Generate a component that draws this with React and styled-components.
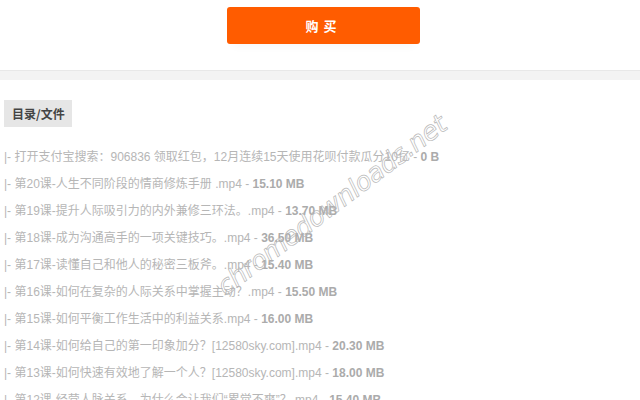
import React from "react";
import styled, { createGlobalStyle } from "styled-components";

const GlobalStyle = createGlobalStyle`
  html, body {
    margin: 0;
    padding: 0;
    background: #fff;
  }
  body {
    font-family: "Liberation Sans", "Noto Sans CJK SC", Arial, sans-serif;
  }
`;

const Page = styled.div`
  position: relative;
  width: 640px;
  height: 400px;
  overflow: hidden;
`;

const TopBar = styled.div`
  height: 70px;
  display: flex;
  justify-content: center;
  padding-top: 7px;
  box-sizing: border-box;
`;

const BuyButton = styled.button`
  width: 193px;
  height: 37px;
  margin-left: 7px;
  border: none;
  border-radius: 3px;
  background: #ff5c00;
  color: #fff;
  font-family: "Noto Sans CJK SC", sans-serif;
  font-size: 13px;
  font-weight: bold;
  letter-spacing: 5px;
  padding-left: 6px;
  cursor: pointer;
  box-shadow: 0 8px 10px -6px rgba(0, 0, 0, 0.04);
`;

const Divider = styled.div`
  height: 10px;
  background: #f3f3f3;
  border-top: 1px solid #e8e8e8;
  box-sizing: border-box;
`;

const Content = styled.div`
  padding: 20px 4px 0;
`;

const Label = styled.div`
  display: inline-block;
  height: 27px;
  line-height: 27px;
  padding: 0 7px 0 8px;
  background: #e6e6e6;
  color: #444;
  font-family: "Noto Sans CJK SC", sans-serif;
  font-size: 12px;
  font-weight: bold;
`;

const FileList = styled.ul`
  list-style: none;
  margin: 17px 0 0;
  padding: 0;
`;

const FileItem = styled.li`
  height: 27px;
  line-height: 27px;
  font-size: 12px;
  color: #b6b6b6;
  white-space: nowrap;
`;

const Size = styled.b`
  color: #ababab;
`;

const Watermark = styled.div`
  position: absolute;
  left: 192px;
  top: 190px;
  transform: rotate(-37deg);
  transform-origin: center;
  font-family: "DejaVu Sans", sans-serif;
  font-style: italic;
  font-size: 26px;
  color: transparent;
  -webkit-text-stroke: 0.7px #b8b8b8;
  letter-spacing: -0.5px;
  pointer-events: none;
  white-space: nowrap;
`;

const files = [
  { name: "打开支付宝搜索：906836 领取红包，12月连续15天使用花呗付款瓜分10亿", size: "0 B" },
  { name: "第20课-人生不同阶段的情商修炼手册 .mp4", size: "15.10 MB" },
  { name: "第19课-提升人际吸引力的内外兼修三环法。.mp4", size: "13.70 MB" },
  { name: "第18课-成为沟通高手的一项关键技巧。.mp4", size: "36.50 MB" },
  { name: "第17课-读懂自己和他人的秘密三板斧。.mp4", size: "15.40 MB" },
  { name: "第16课-如何在复杂的人际关系中掌握主动？.mp4", size: "15.50 MB" },
  { name: "第15课-如何平衡工作生活中的利益关系.mp4", size: "16.00 MB" },
  { name: "第14课-如何给自己的第一印象加分？[12580sky.com].mp4", size: "20.30 MB" },
  { name: "第13课-如何快速有效地了解一个人？[12580sky.com].mp4", size: "18.00 MB" },
  { name: "第12课-经营人脉关系，为什么会让我们“累觉不爽”？.mp4", size: "15.40 MB" },
];

const App = () => {
  return (
    <Page>
      <GlobalStyle />
      <TopBar>
        <BuyButton>购买</BuyButton>
      </TopBar>
      <Divider />
      <Content>
        <Label>目录/文件</Label>
        <FileList>
          {files.map((f) => (
            <FileItem key={f.name}>
              |- {f.name} - <Size>{f.size}</Size>
            </FileItem>
          ))}
        </FileList>
      </Content>
      <Watermark>chromedownloads.net</Watermark>
    </Page>
  );
};

export default App;
